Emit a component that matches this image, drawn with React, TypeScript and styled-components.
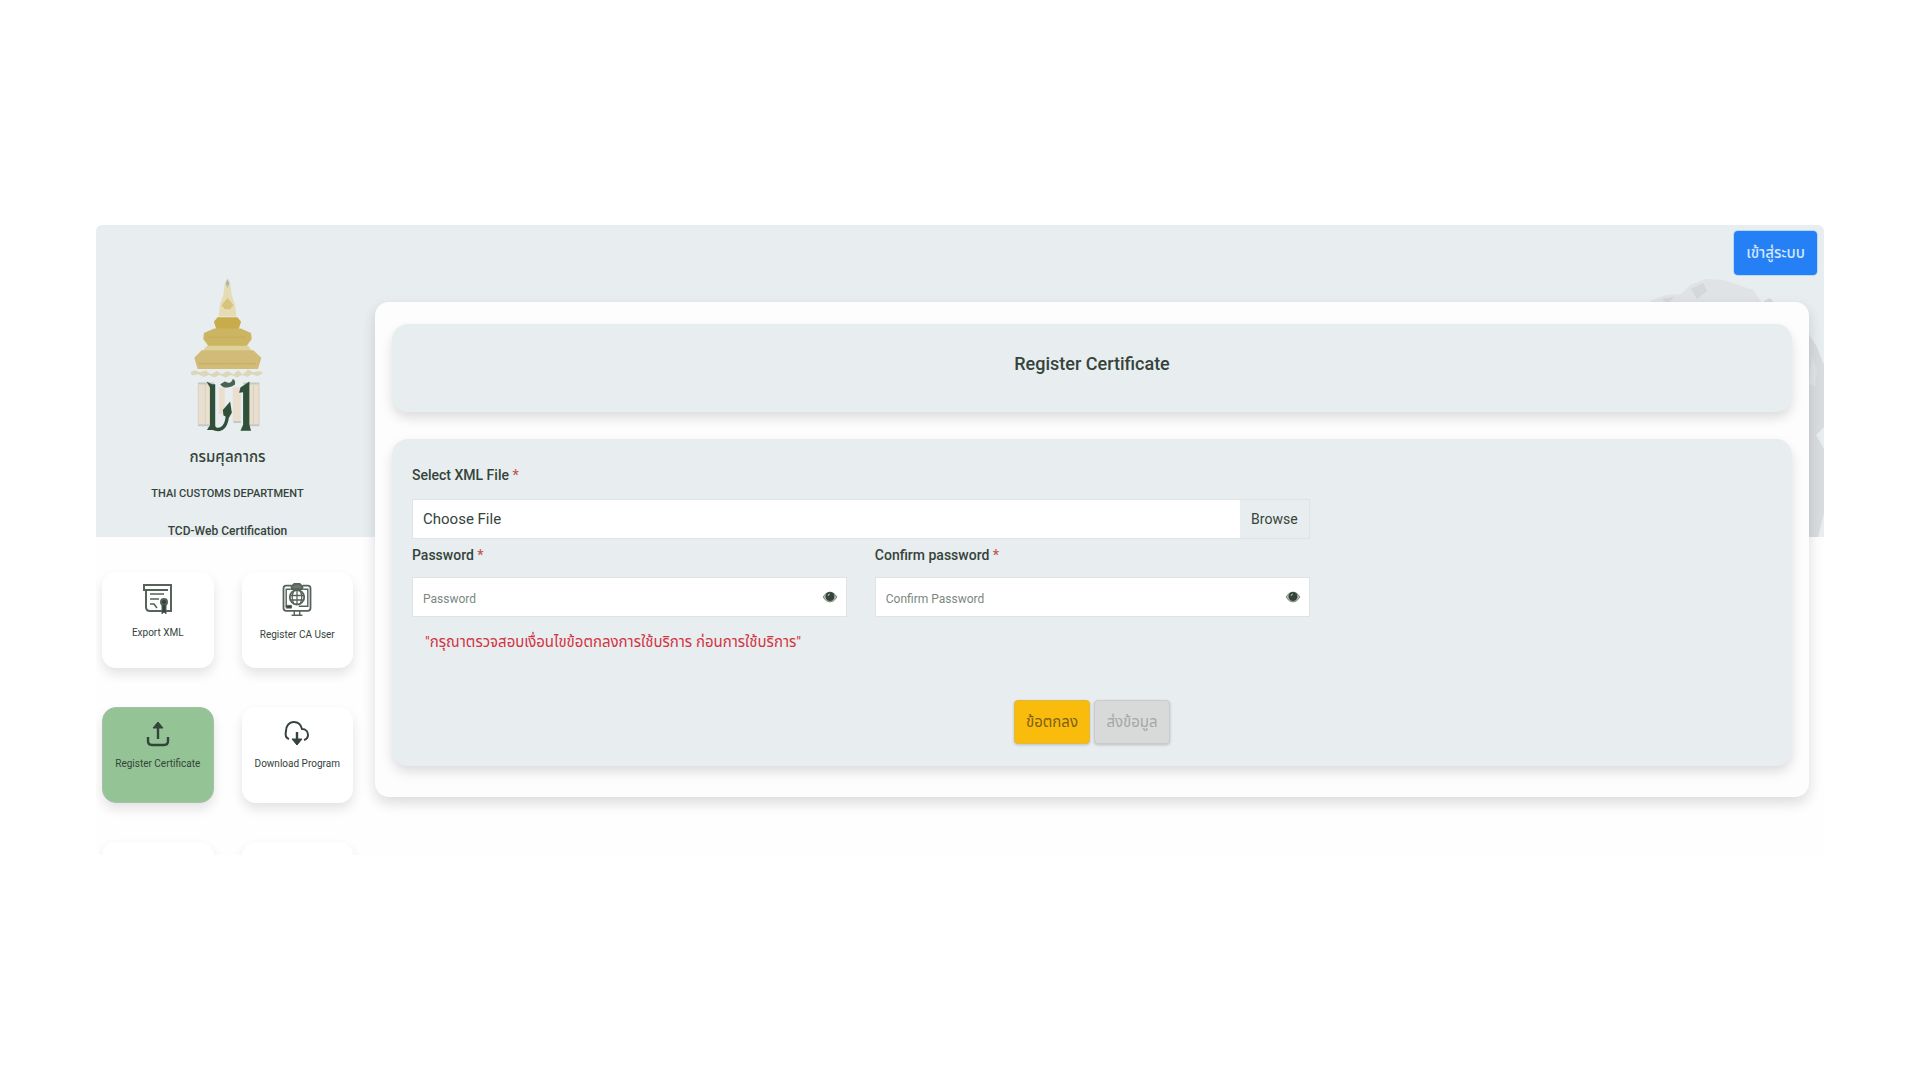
import React from "react";
import styled, { createGlobalStyle, css } from "styled-components";

const ink = "#34443b";
const mist = "#e8edf0";

const GlobalStyle = createGlobalStyle`
  * { box-sizing: border-box; }
  body {
    margin: 0;
    background: #fff;
    color: ${ink};
    font-family: Roboto, "Noto Sans Thai", "Noto Sans", sans-serif;
    font-size: 15px;
    line-height: 24px;
  }
  button, input { font: inherit; color: inherit; }
`;

const Page = styled.div`
  padding: 225px 5%;
`;

const Frame = styled.div`
  position: relative;
  display: flex;
  align-items: flex-start;
  max-height: 630px;
  overflow: hidden;
  border-radius: 6px;
  background: linear-gradient(${mist} 312px, #fefefe 312px);
`;

const Globe = styled.svg`
  position: absolute;
  top: 50px;
  right: 0;
  width: 184px;
  height: 262px;
`;

const LoginButton = styled.button`
  position: absolute;
  top: 6px;
  right: 7px;
  height: 44px;
  padding: 0 12px;
  border: 0;
  border-radius: 4px;
  background: #2680f5;
  box-shadow: 0 0 0 1px #b9d8f8;
  color: #d3e7fd;
  font-weight: 500;
`;

const Sidebar = styled.aside`
  flex: 0 0 279px;
  padding: 53px 22px 0 6px;
`;

const Brand = styled.header`
  display: flex;
  flex-direction: column;
  align-items: center;
  gap: 13px;
  margin-bottom: 29px;
`;

const BrandLine = styled.p<{ $size: number }>`
  margin: 0;
  font-size: ${(p) => p.$size}px;
  font-weight: 500;
  white-space: nowrap;
`;

const Tiles = styled.nav`
  display: grid;
  grid-template-columns: 1fr 1fr;
  gap: 39px 28px;
`;

const Tile = styled.a<{ $active?: boolean }>`
  display: flex;
  flex-direction: column;
  align-items: center;
  gap: 9px;
  height: 96px;
  padding-top: 10px;
  border-radius: 14px;
  background: ${(p) => (p.$active ? "#94c395" : "#fff")};
  box-shadow: 0 6px 12px rgba(0, 0, 0, 0.11);
  color: ${ink};
  font-size: 10px;
  line-height: 16px;
  text-decoration: none;
  white-space: nowrap;
  ${(p) => p.$active && css`border: 1px solid #a9bda9; padding-top: 9px;`}
`;

const Panel = styled.main`
  position: relative;
  flex: 1;
  min-width: 0;
  display: flex;
  flex-direction: column;
  gap: 27px;
  margin: 77px 15px 58px 0;
  padding: 22px 17px 31px;
  border-radius: 14px;
  background: #fdfdfd;
  box-shadow: 0 6px 14px rgba(0, 0, 0, 0.14);
`;

const cardLook = css`
  border-radius: 16px;
  background: ${mist};
  box-shadow: 0 6px 12px rgba(0, 0, 0, 0.13);
`;

const TitleCard = styled.header`
  ${cardLook}
  padding: 28px 20px 36px;
  text-align: center;
`;

const Title = styled.h1`
  margin: 0;
  font-size: 18px;
  font-weight: 500;
  line-height: 24px;
`;

const FormCard = styled.form`
  ${cardLook}
  padding: 24px 20px 22px;
`;

const Fields = styled.div`
  display: grid;
  grid-template-columns: 1fr 1fr;
  gap: 4px 28px;
  width: 66%;
`;

const Field = styled.div<{ $wide?: boolean }>`
  display: flex;
  flex-direction: column;
  gap: ${(p) => (p.$wide ? 12 : 10)}px;
  grid-column: ${(p) => (p.$wide ? "1 / -1" : "auto")};
`;

const Label = styled.label`
  font-size: 14px;
  font-weight: 500;
`;

const Star = styled.span`
  color: #c4564f;
`;

const FilePicker = styled.label`
  position: relative;
  display: flex;
  height: 40px;
  border: 1px solid #dfe3e6;
  background: #fff;
  line-height: 38px;
  cursor: pointer;
`;

const FileInput = styled.input`
  position: absolute;
  inset: 0;
  width: 100%;
  opacity: 0;
`;

const FileName = styled.span`
  flex: 1;
  padding-left: 10px;
`;

const Browse = styled.span`
  padding: 0 11px;
  background: ${mist};
  font-size: 14px;
`;

const PasswordBox = styled.div`
  display: flex;
  align-items: center;
  height: 40px;
  padding: 0 8px 0 10px;
  border: 1px solid #dfe3e6;
  background: #fff;
`;

const PasswordInput = styled.input`
  flex: 1;
  min-width: 0;
  padding: 4px 0 0;
  border: 0;
  outline: 0;
  background: none;
  font-size: 12px;
  &::placeholder { color: #7c8781; opacity: 1; }
`;

const EyeButton = styled.button`
  display: flex;
  padding: 0;
  border: 0;
  background: none;
`;

const Warning = styled.p`
  margin: 13px 0 46px;
  padding-left: 13px;
  color: #d2333f;
`;

const Actions = styled.div`
  display: flex;
  justify-content: center;
  gap: 4px;
`;

const ActionButton = styled.button<{ $accent?: boolean }>`
  width: 76px;
  height: 44px;
  padding: 0;
  border: 1px solid ${(p) => (p.$accent ? "#e3b93b" : "#c9cccc")};
  border-radius: 4px;
  background: ${(p) => (p.$accent ? "#f9bc0d" : "#d8dada")};
  box-shadow: 0 1px 3px rgba(0, 0, 0, 0.2);
  color: ${(p) => (p.$accent ? "#7d6012" : "#a3a8a7")};
`;

const Emblem = () => (
  <svg width="73" height="154" viewBox="302 172 220 464" aria-hidden="true">
    <path d="M412 172l8 14 4 34 11 34 4 34H385l4-34 11-34 4-34z" fill="#e5dcb6" />
    <path d="M412 176l5 12-5 14-5-14z" fill="#aeb5ad" />
    <path d="M412 232l18 22-10 12h-16l-10-12z" fill="#d7c47b" />
    <path d="M382 290h60l11 14-8 24h-66l-8-24z" fill="#c9ac4a" />
    <path d="M372 324h80l31 14 2 18-16 22H355l-16-22 2-18z" fill="#ccb562" />
    <path d="M350 376h124l12 16H338z" fill="#ded19a" />
    <path d="M334 390h156l24 22-10 34H322l-10-34z" fill="#d0bc78" />
    <path d="M326 430h172M356 350h112M384 308h56" stroke="#c4a74e" strokeWidth="4" strokeDasharray="5 3" />
    <path d="M312 450l18 6 16-6 16 12 18-10 14 10 18-10 18 10 14-12 14 12 16-14 16 8 18-4 12 6-18 10-16-6-14 8-16-6-16 8-16-8-18 8-18-8-16 8-16-8-16 6-16-8-16 4-12-8z" fill="#ddd7ba" />
    <path d="M324 488h48v128h-48zM386 502h18v80h-18zM428 502h24v104h-24zM462 488h46v128h-46z" fill="#eadfce" />
    <path d="M323 490h48M323 616h34M460 490h48M476 616h32M430 606h22" stroke="#c3c9c2" strokeWidth="6" />
    <path d="M324 494v120M345 494v120M490 494v120M507 494v120" stroke="#d2d2c6" strokeWidth="3" />
    <path d="M349 484l16 8h10v126l8 12h-33l9-14V502z" fill="#31503a" />
    <path d="M366 624c30 14 48-6 46-56" fill="none" stroke="#31503a" strokeWidth="10" />
    <path d="M420 544l5 34-9 16-16-8-2-16z" fill="#31503a" />
    <path d="M478 484v130l5 18h-32l8-18V516l-12 2 4-16z" fill="#31503a" />
    <path d="M390 492q8 12 22 10t22-8q4-14-6-18-4 12-14 12l-10-4z" fill="#4a6250" />
  </svg>
);

const EyeIcon = () => (
  <svg width="16" height="14" viewBox="0 0 16 14" aria-hidden="true">
    <path d="M1 7q3-5 7-5t7 5q-3 5-7 5T1 7z" fill="#b9c0bb" stroke="#7e8982" strokeWidth="1" />
    <circle cx="8" cy="6.500" r="4.500" fill={ink} />
    <path d="M6 6q0-2 2-2" fill="none" stroke="#b9c0bb" strokeWidth="1" />
  </svg>
);

const CertificateIcon = () => (
  <svg width="32" height="34" viewBox="0 0 32 34" fill="none" stroke="#56635b" strokeWidth="2" aria-hidden="true">
    <path d="M5 8H2V3h27v26H8q-4 0-4-4V8h22" />
    <path d="M8 12h14M8 17h9M8 22h4l3 4" strokeWidth="1.6" />
    <circle cx="22" cy="20" r="3" fill={ink} />
    <path d="M20 23v9l2-2 2 2v-9" fill={ink} strokeWidth="1" />
  </svg>
);

const CaUserIcon = () => (
  <svg width="36" height="36" viewBox="0 0 36 40" fill="none" stroke="#56635b" strokeWidth="2" aria-hidden="true">
    <path d="M12 4H6a3 3 0 0 0-3 3v22a3 3 0 0 0 3 3h24a3 3 0 0 0 3-3V7a3 3 0 0 0-3-3h-6" />
    <path d="M9 27H6V8h5M25 8h5v19H20M15 32v4M21 32v4M12 37h12" strokeWidth="1.6" />
    <path d="M12 5l3-3h6l3 3v3H12z" fill="#6a766f" />
    <circle cx="18" cy="17" r="8" />
    <path d="M10 15h16M10 20h16M18 9v16M15 9c-3 5-3 11 0 16M21 9c3 5 3 11 0 16" strokeWidth="1.4" />
    <path d="M6 26h6v3H6z" fill={ink} strokeWidth="1" />
  </svg>
);

const UploadIcon = () => (
  <svg width="30" height="30" viewBox="0 0 30 30" fill="none" stroke={ink} strokeWidth="2.4" aria-hidden="true">
    <path d="M5 20v4q0 4 4 4h12q4 0 4-4v-4M15 22V7" />
    <path d="M10 11l5-6 5 6z" fill={ink} strokeWidth="1" />
  </svg>
);

const CloudIcon = () => (
  <svg width="30" height="30" viewBox="0 0 30 30" fill="none" stroke={ink} strokeWidth="2" aria-hidden="true">
    <path d="M7 22c-3-1-4-4-3-8 0-5 3-9 8-9 4 0 7 3 8 7 4 0 6 3 6 6s-1 4-4 5" />
    <path d="M15 15v9" strokeWidth="2.4" />
    <path d="M10 22h10l-5 6z" fill={ink} strokeWidth="1" />
  </svg>
);

const tiles = [
  { label: "Export XML", Icon: CertificateIcon },
  { label: "Register CA User", Icon: CaUserIcon },
  { label: "Register Certificate", Icon: UploadIcon, active: true },
  { label: "Download Program", Icon: CloudIcon },
];

const passwords = [
  { id: "password", label: "Password", hint: "Password" },
  { id: "confirm", label: "Confirm password", hint: "Confirm Password" },
];

export default function App() {
  return (
    <>
      <GlobalStyle />
      <Page>
        <Frame>
          <Globe viewBox="0 0 184 262" fill="#d9dcde" aria-hidden="true">
            <path d="M4 32l8-7 14-5 15-1 10-9 14-6 18 1 18 6 12 4 7 10 7 7z" opacity=".6" />
            <path d="M22 24l12-2-6 7zM51 14l12-6 4 8-10 8zM124 26l6-3 8 9h-12z" fill="#d5d8da" />
            <path d="M168 58l9 14 7 18v62l-8 8 8 14v64l-6 24h-10z" />
            <path d="M172 82l5 12-2 18-6-4z" fill="#e1e4e6" />
          </Globe>
          <Sidebar>
            <Brand>
              <Emblem />
              <BrandLine $size={15} lang="th">กรมศุลกากร</BrandLine>
              <BrandLine $size={11}>THAI CUSTOMS DEPARTMENT</BrandLine>
              <BrandLine $size={12}>TCD-Web Certification</BrandLine>
            </Brand>
            <Tiles>
              {tiles.map(({ label, Icon, active }) => (
                <Tile key={label} href="#" $active={active}>
                  <Icon />
                  {label}
                </Tile>
              ))}
              <Tile href="#" aria-label="More" />
              <Tile href="#" aria-label="More" />
            </Tiles>
          </Sidebar>
          <Panel>
            <TitleCard>
              <Title>Register Certificate</Title>
            </TitleCard>
            <FormCard onSubmit={(e: React.FormEvent) => e.preventDefault()}>
              <Fields>
                <Field $wide>
                  <Label htmlFor="xml">Select XML File <Star>*</Star></Label>
                  <FilePicker>
                    <FileInput id="xml" type="file" accept=".xml" />
                    <FileName>Choose File</FileName>
                    <Browse>Browse</Browse>
                  </FilePicker>
                </Field>
                {passwords.map(({ id, label, hint }) => (
                  <Field key={id}>
                    <Label htmlFor={id}>{label} <Star>*</Star></Label>
                    <PasswordBox>
                      <PasswordInput id={id} type="password" placeholder={hint} />
                      <EyeButton type="button" aria-label="Show password"><EyeIcon /></EyeButton>
                    </PasswordBox>
                  </Field>
                ))}
              </Fields>
              <Warning lang="th">"กรุณาตรวจสอบเงื่อนไขข้อตกลงการใช้บริการ ก่อนการใช้บริการ"</Warning>
              <Actions lang="th">
                <ActionButton type="button" $accent>ข้อตกลง</ActionButton>
                <ActionButton type="submit" disabled>ส่งข้อมูล</ActionButton>
              </Actions>
            </FormCard>
          </Panel>
          <LoginButton type="button" lang="th">เข้าสู่ระบบ</LoginButton>
        </Frame>
      </Page>
    </>
  );
}
